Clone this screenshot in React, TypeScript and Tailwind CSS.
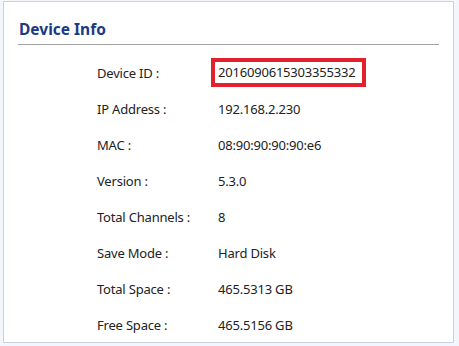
const rows: { label: string; value: string; highlight?: boolean }[] = [
  { label: 'Device ID :', value: '2016090615303355332', highlight: true },
  { label: 'IP Address :', value: '192.168.2.230' },
  { label: 'MAC :', value: '08:90:90:90:90:e6' },
  { label: 'Version :', value: '5.3.0' },
  { label: 'Total Channels :', value: '8' },
  { label: 'Save Mode :', value: 'Hard Disk' },
  { label: 'Total Space :', value: '465.5313 GB' },
  { label: 'Free Space :', value: '465.5156 GB' }
]

const App = () => {
  return (
    <div className="w-[459px] h-[346px] bg-[#f3f6fa] pt-px pl-[3px] font-['Noto_Sans',sans-serif]">
      <div className="w-[451px] h-[342px] bg-white border border-[#c9d2e3] flex flex-col overflow-hidden">
        {/* Header */}
        <div className="mx-[14px] h-[43px] shrink-0 border-b border-[#a3a3a3] flex items-end pb-[7px]">
          <h2 className="text-[15.5px] font-bold leading-none text-[#1b3a84] pl-px">Device Info</h2>
        </div>

        {/* Info rows */}
        <div className="mt-[11px] flex flex-col shrink-0">
          {rows.map((row) => (
            <div key={row.label} className="h-[36px] shrink-0 flex items-center text-[13px] text-[#222] tracking-[-0.2px]">
              <div className="w-[114px] ml-[93px] shrink-0">{row.label}</div>
              {row.highlight ? (
                <div className="h-[29px] w-[155px] mb-[3px] border-4 border-[#e3202e] pl-[3px] flex items-center">
                  {row.value}
                </div>
              ) : (
                <div className="pl-[7px]">{row.value}</div>
              )}
            </div>
          ))}
        </div>
      </div>
    </div>
  )
}

export default App
